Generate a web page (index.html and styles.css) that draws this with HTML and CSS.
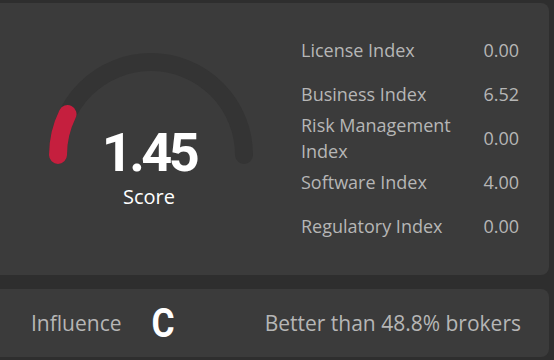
FILE: index.html
```html
<!DOCTYPE html>
<html lang="en">
<head>
  <meta charset="UTF-8" />
  <title>Broker Score</title>
  <link rel="stylesheet" href="styles.css">
</head>
<body>
  <div class="page">
    <div class="card score-card">
      <div class="gauge">
        <svg class="gauge-arc" width="204" height="112" viewBox="0 0 204 112">
          <path d="M 9 102 A 93 93 0 0 1 195 102" fill="none" stroke="#343434" stroke-width="18" stroke-linecap="round"/>
          <path d="M 9 102 A 93 93 0 0 1 18.5 61.1" fill="none" stroke="#c51f3e" stroke-width="18" stroke-linecap="round"/>
        </svg>
        <div class="gauge-text">
          <div class="score-value">1.45</div>
          <div class="score-label">Score</div>
        </div>
      </div>

      <div class="index-list">
        <div class="index-name">License Index</div>
        <div class="index-value">0.00</div>
        <div class="index-name">Business Index</div>
        <div class="index-value">6.52</div>
        <div class="index-name">Risk Management Index</div>
        <div class="index-value">0.00</div>
        <div class="index-name">Software Index</div>
        <div class="index-value">4.00</div>
        <div class="index-name">Regulatory Index</div>
        <div class="index-value">0.00</div>
      </div>
    </div>

    <div class="card influence-card">
      <span class="influence-label">Influence</span>
      <span class="influence-grade">C</span>
      <span class="influence-rank">Better than 48.8% brokers</span>
    </div>
  </div>
</body>
</html>
```

FILE: styles.css
```css
* {
  margin: 0;
  padding: 0;
  box-sizing: border-box;
}

body {
  width: 554px;
  height: 360px;
  background: #2e2e2e;
  font-family: 'Open Sans', 'Noto Sans', sans-serif;
  overflow: hidden;
}

.page {
  display: flex;
  flex-direction: column;
  gap: 14px;
  padding: 3px 5px 0 0;
}

.card {
  background: #3b3b3b;
  border-radius: 0 8px 8px 0;
}

.score-card {
  height: 272px;
  display: flex;
}

.gauge {
  display: grid;
  justify-items: center;
  align-items: start;
  margin: 50px 0 0 49px;
  width: 204px;
  height: 170px;
}

.gauge > * {
  grid-area: 1 / 1;
}

.gauge-text {
  padding: 73px 4px 0 0;
  text-align: center;
  color: #fff;
}

.score-value {
  font-family: Roboto, sans-serif;
  font-weight: 700;
  font-size: 54px;
  line-height: 54px;
  letter-spacing: -3.5px;
}

.score-label {
  font-size: 20px;
  line-height: 20px;
  margin-top: 7px;
}

.index-list {
  display: grid;
  grid-template-columns: 175px auto;
  grid-auto-rows: 44px;
  align-items: center;
  justify-content: space-between;
  width: 218px;
  margin: 25px 0 0 48px;
  color: #b6b6b6;
  font-size: 18px;
  line-height: 26px;
}

.index-value {
  text-align: right;
}

.influence-card {
  height: 68px;
  display: flex;
  align-items: center;
  padding: 0 28px 0 31px;
  font-size: 21px;
  color: #b6b6b6;
}

.influence-grade {
  font-family: Roboto, sans-serif;
  font-weight: 700;
  font-size: 40px;
  color: #fff;
  margin-left: 28px;
  transform: scaleX(0.88);
}

.influence-rank {
  margin-left: auto;
}
```
